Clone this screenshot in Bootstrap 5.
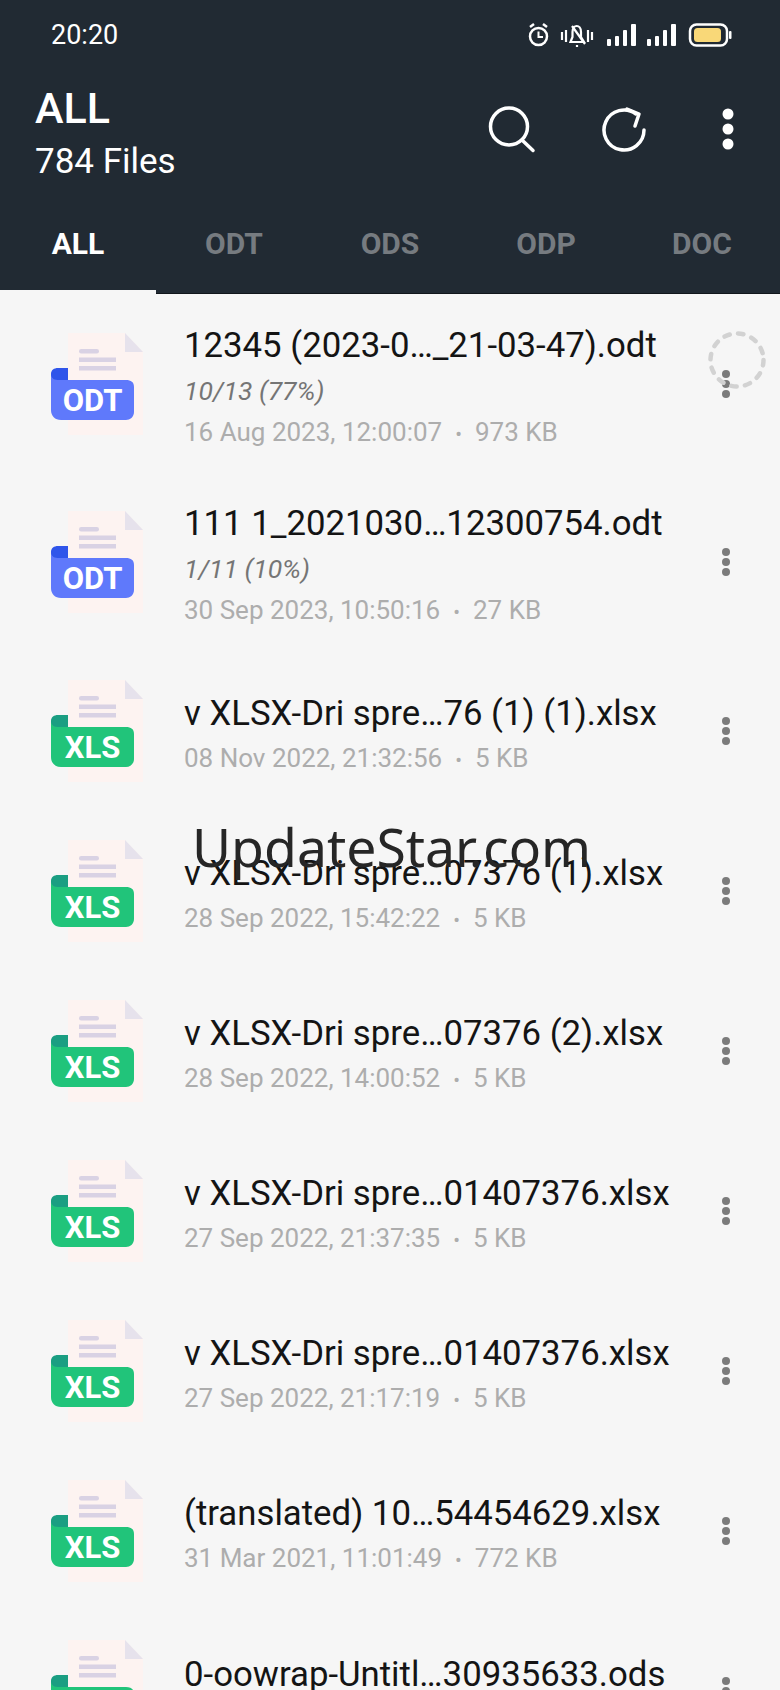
<!DOCTYPE html>
<html lang="en">
<head>
<meta charset="utf-8">
<title>All files</title>
<link href="https://cdn.jsdelivr.net/npm/bootstrap@5.3.0/dist/css/bootstrap.min.css" rel="stylesheet">
<style>
html,body{height:1690px;overflow:hidden}
body{background:#f6f6f6;font-family:Roboto,"Liberation Sans",sans-serif;position:relative;width:780px}
.app-head{background:#212a33;height:294px;color:#fff;border-bottom:1px solid #11161b}
.status-row{height:70px;padding-left:51px}
.status-time{font-size:27px;line-height:1}
.status-svg{display:block;position:absolute;left:520px;top:15px}
.tool-row{height:120px;padding-left:35px}
.head-title{font-size:43px;font-weight:500;line-height:50px;margin-top:8px}
.head-sub{font-size:35px;line-height:48px;margin-top:5px}
.tool-svg{display:block;margin-left:auto;margin-right:36px;width:260px;height:60px;margin-top:-2px}
.tab-row{height:104px;margin:0}
.tab-cell{width:156px;color:#767b80;font-size:30px;font-weight:700;height:104px;padding-top:2px}
.tab-cell.is-on{color:#fff;box-shadow:inset 0 -4px 0 #f6f6f6}
.file-row{height:160px;position:relative}
.file-row.three{height:178px}
.doc-svg{display:block;flex:none;width:100px;height:110px;margin:6px 36px 0 48px}
.file-text{padding-top:9px;min-width:0;flex:1}
.file-name{font-size:34.750px;line-height:49px;color:#141414;white-space:nowrap}
.file-prog{font-size:26.500px;line-height:42px;color:#757575;font-style:italic}
.file-meta{font-size:26px;line-height:40px;color:#adadad;white-space:nowrap}
.file-meta i{font-style:normal;margin:0 13px;font-size:20px}
.dots-svg{display:block;flex:none;width:12px;height:32px;margin:2px 48px 0 0}
.busy-ring{position:absolute;left:705px;top:330px}
.water-mark{position:absolute;left:192px;top:811px;font-family:"Noto Sans",sans-serif;font-size:53.500px;line-height:72px;color:#262626;white-space:nowrap}
.tag-text{font-family:Roboto,sans-serif;font-weight:700;font-size:31px;fill:#fff;text-anchor:middle}
</style>
</head>
<body>
<svg width="0" height="0" class="position-absolute">
  <symbol id="paper" viewBox="0 0 100 110">
    <path d="M20 2H77L95 21V104H20Z" fill="#fdf3f1"/>
    <path d="M77 2L95 21H77Z" fill="#e6e2ec"/>
    <rect x="31" y="18" width="20" height="4.500" rx="2.200" fill="#d9d2e4"/>
    <rect x="31" y="26.500" width="37" height="4.500" fill="#d9d2e4"/>
    <rect x="31" y="35" width="37" height="4.500" fill="#d9d2e4"/>
  </symbol>
  <symbol id="blue-tag" viewBox="0 0 100 110">
    <path d="M3 43C3 39 6 37 10 37H20V55H3Z" fill="#2f55ea"/>
    <path d="M3 43C3 48 7 49 11 49H78C83 49 86 51 86 56V81C86 86 82 89 78 89H13C7 89 3 85 3 79Z" fill="#5f79fb"/>
  </symbol>
  <symbol id="green-tag" viewBox="0 0 100 110">
    <path d="M3 43C3 39 6 37 10 37H20V55H3Z" fill="#1a9e82"/>
    <path d="M3 43C3 48 7 49 11 49H78C83 49 86 51 86 56V81C86 86 82 89 78 89H13C7 89 3 85 3 79Z" fill="#21c47a"/>
  </symbol>
  <symbol id="menu-dots" viewBox="0 0 12 32">
    <circle cx="6" cy="6" r="4" fill="#7b7b7b"/><circle cx="6" cy="16" r="4" fill="#7b7b7b"/><circle cx="6" cy="26" r="4" fill="#7b7b7b"/>
  </symbol>
</svg>

<header class="app-head">
  <div class="status-row d-flex align-items-center">
    <span class="status-time">20:20</span>
    <svg class="status-svg" width="230" height="40" viewBox="520 15 230 40" fill="none" stroke="#fff">
      <circle cx="538.500" cy="36.500" r="8.500" stroke-width="2.500"/>
      <path d="M538.500 31.500V37H543" stroke-width="2"/>
      <path d="M530 27L534 24M547 27L543 24" stroke-width="2.500"/>
      <path d="M562 32V40M566 30V42M592 32V40M588 30V42" stroke-width="2.200"/>
      <path d="M570.500 42H584L581 37V32C581 24 572.500 24 572.500 32V37ZM577 45V47M572 26L585 44" stroke-width="2.200"/>
      <g fill="#fff" stroke="none">
        <rect x="607" y="39" width="4" height="7" rx="1"/><rect x="615" y="36" width="4" height="10" rx="1"/><rect x="623" y="30" width="4" height="16" rx="1"/><rect x="631" y="24" width="5" height="22" rx="1"/>
        <rect x="647" y="39" width="4" height="7" rx="1"/><rect x="655" y="36" width="4" height="10" rx="1"/><rect x="663" y="30" width="4" height="16" rx="1"/><rect x="671" y="24" width="5" height="22" rx="1"/>
      </g>
      <rect x="690" y="24.500" width="37" height="21" rx="6.500" stroke-width="2.500"/>
      <rect x="694" y="28" width="27" height="14" rx="3.500" fill="#f9d878" stroke="none"/>
      <rect x="729" y="31" width="2.500" height="8" rx="1" fill="#fff" stroke="none"/>
    </svg>
  </div>
  <div class="tool-row d-flex align-items-center">
    <div>
      <div class="head-title">ALL</div>
      <div class="head-sub">784 Files</div>
    </div>
    <svg class="tool-svg" viewBox="484 100 260 60" fill="none" stroke="#fff" stroke-width="3.500" stroke-linecap="round">
      <circle cx="509" cy="127.500" r="18.500"/>
      <path d="M522 141L533 151.500"/>
      <path d="M644 131A20 20 0 1 1 636 115"/>
      <path d="M627 110L639 115L635 127" stroke-linejoin="round"/>
      <g fill="#fff" stroke="none"><circle cx="728" cy="115" r="5.500"/><circle cx="728" cy="130" r="5.500"/><circle cx="728" cy="145" r="5.500"/></g>
    </svg>
  </div>
  <nav class="tab-row d-flex">
    <div class="tab-cell is-on d-flex align-items-center justify-content-center">ALL</div>
    <div class="tab-cell d-flex align-items-center justify-content-center">ODT</div>
    <div class="tab-cell d-flex align-items-center justify-content-center">ODS</div>
    <div class="tab-cell d-flex align-items-center justify-content-center">ODP</div>
    <div class="tab-cell d-flex align-items-center justify-content-center">DOC</div>
  </nav>
</header>

<main>
  <div class="file-row three d-flex align-items-center">
    <svg class="doc-svg" viewBox="0 0 100 110"><use href="#paper"/><use href="#blue-tag"/><text class="tag-text" x="44.500" y="80">ODT</text></svg>
    <div class="file-text">
      <div class="file-name">12345 (2023-0…_21-03-47).odt</div>
      <div class="file-prog">10/13 (77%)</div>
      <div class="file-meta">16 Aug 2023, 12:00:07<i>•</i>973 KB</div>
    </div>
    <svg class="dots-svg" viewBox="0 0 12 32"><use href="#menu-dots"/></svg>
  </div>
  <div class="file-row three d-flex align-items-center">
    <svg class="doc-svg" viewBox="0 0 100 110"><use href="#paper"/><use href="#blue-tag"/><text class="tag-text" x="44.500" y="80">ODT</text></svg>
    <div class="file-text">
      <div class="file-name">111 1_2021030…12300754.odt</div>
      <div class="file-prog">1/11 (10%)</div>
      <div class="file-meta">30 Sep 2023, 10:50:16<i>•</i>27 KB</div>
    </div>
    <svg class="dots-svg" viewBox="0 0 12 32"><use href="#menu-dots"/></svg>
  </div>
  <div class="file-row d-flex align-items-center">
    <svg class="doc-svg" viewBox="0 0 100 110"><use href="#paper"/><use href="#green-tag"/><text class="tag-text" x="44.500" y="80">XLS</text></svg>
    <div class="file-text">
      <div class="file-name">v XLSX-Dri spre…76 (1) (1).xlsx</div>
      <div class="file-meta">08 Nov 2022, 21:32:56<i>•</i>5 KB</div>
    </div>
    <svg class="dots-svg" viewBox="0 0 12 32"><use href="#menu-dots"/></svg>
  </div>
  <div class="file-row d-flex align-items-center">
    <svg class="doc-svg" viewBox="0 0 100 110"><use href="#paper"/><use href="#green-tag"/><text class="tag-text" x="44.500" y="80">XLS</text></svg>
    <div class="file-text">
      <div class="file-name">v XLSX-Dri spre…07376 (1).xlsx</div>
      <div class="file-meta">28 Sep 2022, 15:42:22<i>•</i>5 KB</div>
    </div>
    <svg class="dots-svg" viewBox="0 0 12 32"><use href="#menu-dots"/></svg>
  </div>
  <div class="file-row d-flex align-items-center">
    <svg class="doc-svg" viewBox="0 0 100 110"><use href="#paper"/><use href="#green-tag"/><text class="tag-text" x="44.500" y="80">XLS</text></svg>
    <div class="file-text">
      <div class="file-name">v XLSX-Dri spre…07376 (2).xlsx</div>
      <div class="file-meta">28 Sep 2022, 14:00:52<i>•</i>5 KB</div>
    </div>
    <svg class="dots-svg" viewBox="0 0 12 32"><use href="#menu-dots"/></svg>
  </div>
  <div class="file-row d-flex align-items-center">
    <svg class="doc-svg" viewBox="0 0 100 110"><use href="#paper"/><use href="#green-tag"/><text class="tag-text" x="44.500" y="80">XLS</text></svg>
    <div class="file-text">
      <div class="file-name">v XLSX-Dri spre…01407376.xlsx</div>
      <div class="file-meta">27 Sep 2022, 21:37:35<i>•</i>5 KB</div>
    </div>
    <svg class="dots-svg" viewBox="0 0 12 32"><use href="#menu-dots"/></svg>
  </div>
  <div class="file-row d-flex align-items-center">
    <svg class="doc-svg" viewBox="0 0 100 110"><use href="#paper"/><use href="#green-tag"/><text class="tag-text" x="44.500" y="80">XLS</text></svg>
    <div class="file-text">
      <div class="file-name">v XLSX-Dri spre…01407376.xlsx</div>
      <div class="file-meta">27 Sep 2022, 21:17:19<i>•</i>5 KB</div>
    </div>
    <svg class="dots-svg" viewBox="0 0 12 32"><use href="#menu-dots"/></svg>
  </div>
  <div class="file-row d-flex align-items-center">
    <svg class="doc-svg" viewBox="0 0 100 110"><use href="#paper"/><use href="#green-tag"/><text class="tag-text" x="44.500" y="80">XLS</text></svg>
    <div class="file-text">
      <div class="file-name">(translated) 10…54454629.xlsx</div>
      <div class="file-meta">31 Mar 2021, 11:01:49<i>•</i>772 KB</div>
    </div>
    <svg class="dots-svg" viewBox="0 0 12 32"><use href="#menu-dots"/></svg>
  </div>
  <div class="file-row d-flex align-items-center">
    <svg class="doc-svg" viewBox="0 0 100 110"><use href="#paper"/><use href="#green-tag"/></svg>
    <div class="file-text">
      <div class="file-name">0-oowrap-Untitl…30935633.ods</div>
      <div class="file-meta">&nbsp;</div>
    </div>
    <svg class="dots-svg" viewBox="0 0 12 32"><use href="#menu-dots"/></svg>
  </div>
</main>

<svg class="busy-ring" width="64" height="64" viewBox="0 0 64 64" fill="none"><circle cx="32" cy="30" r="26.500" stroke="#d2d2d2" stroke-width="4.500" stroke-dasharray="5.500 8.400" stroke-linecap="round"/></svg>
<div class="water-mark">UpdateStar.com</div>
<script src="https://cdn.jsdelivr.net/npm/bootstrap@5.3.0/dist/js/bootstrap.bundle.min.js"></script>
</body>
</html>
